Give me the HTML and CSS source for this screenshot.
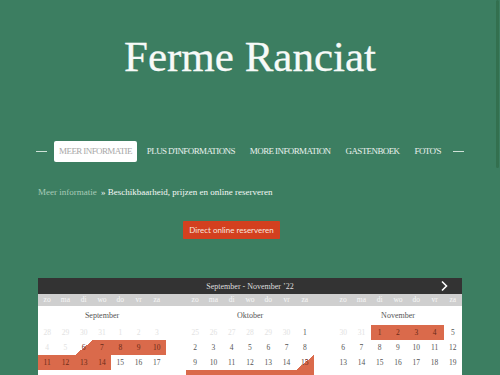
FILE: index.html
```html
<!DOCTYPE html>
<html lang="nl">
<head>
<meta charset="utf-8">
<title>Ferme Ranciat</title>
<link rel="stylesheet" href="styles.css">
</head>
<body>
<div class="scroll-thumb"></div>
<header class="site-header">
  <h1 class="site-title">Ferme Ranciat</h1>
</header>
<nav class="main-nav">
  <span class="nav-dash"></span>
  <a class="nav-item active">MEER INFORMATIE</a>
  <a class="nav-item">PLUS D'INFORMATIONS</a>
  <a class="nav-item">MORE INFORMATION</a>
  <a class="nav-item">GASTENBOEK</a>
  <a class="nav-item">FOTO'S</a>
  <span class="nav-dash"></span>
</nav>
<div class="breadcrumb"><span class="crumb-link">Meer informatie</span> <span class="crumb-current">» Beschikbaarheid, prijzen en online reserveren</span></div>
<div class="cta-wrap"><a class="cta">Direct online reserveren</a></div>
<section class="calendar">
  <div class="cal-top">
    <span class="cal-range">September - November ’22</span>
    <svg class="cal-next" width="10" height="12" viewBox="0 0 10 12"><path d="M3 1.5 L7.5 6 L3 10.5" fill="none" stroke="#fff" stroke-width="1.6"/></svg>
  </div>
  <div class="cal-weekdays">
    <div class="wk"><span>zo</span><span>ma</span><span>di</span><span>wo</span><span>do</span><span>vr</span><span>za</span></div>
    <div class="wk"><span>zo</span><span>ma</span><span>di</span><span>wo</span><span>do</span><span>vr</span><span>za</span></div>
    <div class="wk"><span>zo</span><span>ma</span><span>di</span><span>wo</span><span>do</span><span>vr</span><span>za</span></div>
  </div>
  <div class="cal-months">
    <div class="month">
      <div class="month-name">September</div>
      <div class="days">
        <span class="off">28</span><span class="off">29</span><span class="off">30</span><span class="off">31</span><span class="off">1</span><span class="off">2</span><span class="off">3</span>
        <span class="off">4</span><span class="off">5</span><span class="in">6</span><span class="bk">7</span><span class="bk">8</span><span class="bk">9</span><span class="bk">10</span>
        <span class="bk">11</span><span class="bk">12</span><span class="bk">13</span><span class="bk">14</span><span>15</span><span>16</span><span>17</span>
      </div>
    </div>
    <div class="month">
      <div class="month-name">Oktober</div>
      <div class="days">
        <span class="off">25</span><span class="off">26</span><span class="off">27</span><span class="off">28</span><span class="off">29</span><span class="off">30</span><span>1</span>
        <span>2</span><span>3</span><span>4</span><span>5</span><span>6</span><span>7</span><span>8</span>
        <span>9</span><span>10</span><span>11</span><span>12</span><span>13</span><span>14</span><span class="in">15</span>
        <span class="bk blank"></span><span class="bk blank"></span><span class="bk blank"></span><span class="bk blank"></span><span class="bk blank"></span><span class="bk blank"></span><span class="bk blank"></span>
      </div>
    </div>
    <div class="month">
      <div class="month-name">November</div>
      <div class="days">
        <span class="off">30</span><span class="off">31</span><span class="bk">1</span><span class="bk">2</span><span class="bk">3</span><span class="bk">4</span><span>5</span>
        <span>6</span><span>7</span><span>8</span><span>9</span><span>10</span><span>11</span><span>12</span>
        <span>13</span><span>14</span><span>15</span><span>16</span><span>17</span><span>18</span><span>19</span>
      </div>
    </div>
  </div>
</section>
</body>
</html>
```

FILE: styles.css
```css
html, body {
  margin: 0;
  padding: 0;
}
body {
  background: #3c7e61;
  font-family: "Liberation Serif", "Times New Roman", serif;
  color: #ffffff;
  overflow: hidden;
}
.scroll-thumb {
  position: fixed;
  top: 0;
  right: 1px;
  width: 3px;
  height: 168px;
  background: #33704f;
  border-radius: 2px;
}
.site-header {
  padding-top: 32px;
}
.site-title {
  margin: 0;
  font-weight: normal;
  font-size: 43px;
  line-height: 50px;
  text-align: center;
  color: #f7faf8;
  -webkit-text-stroke: 0.3px #f7faf8;
}
.main-nav {
  margin-top: 59px;
  height: 21px;
  display: flex;
  justify-content: center;
  align-items: center;
  gap: 5px;
}
.nav-dash {
  width: 11px;
  height: 1.5px;
  background: #cfe1d7;
  margin: 0 2px;
}
.nav-item {
  font-size: 9px;
  letter-spacing: -0.6px;
  line-height: 21px;
  padding: 0 5px;
  color: #e9f1ed;
  border-radius: 2px;
}
.nav-item.active {
  background: #ffffff;
  color: #a7a7a7;
}
.breadcrumb {
  margin: 23px 0 0 38px;
  font-size: 9px;
  line-height: 14px;
}
.crumb-link {
  color: #a8cbb8;
}
.crumb-current {
  color: #f4f8f6;
  margin-left: 2px;
}
.cta-wrap {
  margin-top: 22px;
  display: flex;
  justify-content: center;
}
.cta {
  display: block;
  height: 18px;
  line-height: 18px;
  padding: 0 6px;
  margin-right: 37px;
  background: #d3401f;
  color: #f8e6df;
  font-family: "Lato", "Liberation Sans", sans-serif;
  font-size: 8px;
  border-radius: 1px;
}
.calendar {
  margin: 39px 38px 0 38px;
  background: #ffffff;
}
.cal-top {
  height: 16px;
  background: #333333;
  display: flex;
  align-items: center;
  justify-content: center;
  position: relative;
}
.cal-range {
  font-size: 8px;
  color: #dedede;
}
.cal-next {
  position: absolute;
  right: 13px;
  top: 2px;
}
.cal-weekdays {
  height: 12px;
  background: #cfcfcf;
  display: grid;
  grid-template-columns: repeat(3, 128px);
  column-gap: 20px;
}
.wk {
  display: grid;
  grid-template-columns: repeat(7, 1fr);
}
.wk span {
  font-size: 7.5px;
  line-height: 12px;
  text-align: center;
  color: #f7f7f7;
}
.cal-months {
  display: grid;
  grid-template-columns: repeat(3, 128px);
  column-gap: 20px;
}
.month-name {
  height: 19px;
  line-height: 19px;
  font-size: 8px;
  text-align: center;
  color: #555555;
}
.days {
  display: grid;
  grid-template-columns: repeat(7, 1fr);
  grid-auto-rows: 15px;
}
.days span {
  font-size: 7.5px;
  line-height: 15px;
  text-align: center;
  color: #555555;
}
.days span.off {
  color: #e2e2e2;
}
.days span.bk {
  background: #da6a4b;
  color: #6b2a18;
}
.days span.in {
  background: linear-gradient(to bottom right, transparent 50%, #da6a4b 50%);
  color: #6b2a18;
}
```
